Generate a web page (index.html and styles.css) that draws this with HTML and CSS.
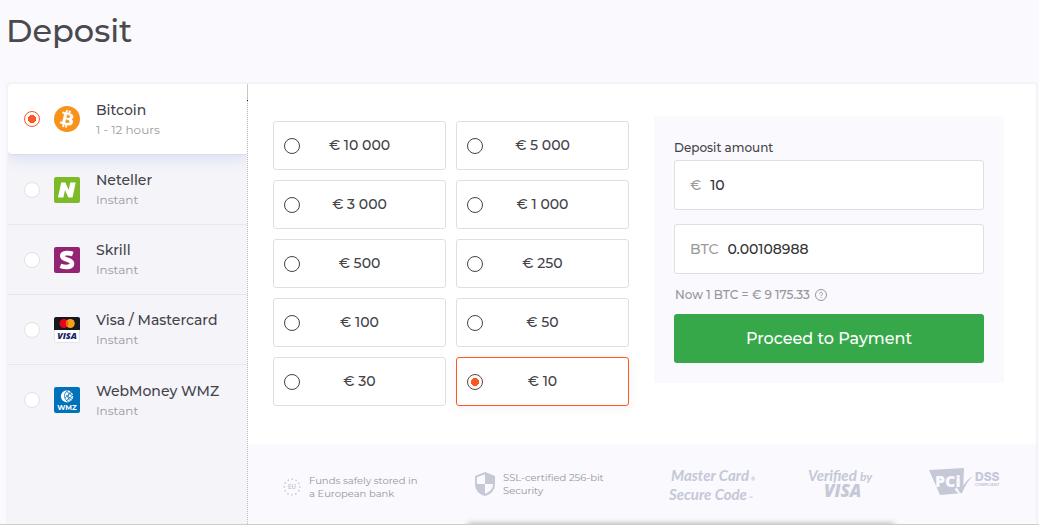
FILE: index.html
```html
<!DOCTYPE html>
<html lang="en">
<head>
<meta charset="utf-8">
<meta name="viewport" content="width=device-width, initial-scale=1">
<title>Deposit</title>
<link rel="stylesheet" href="styles.css">
</head>
<body>
<main class="page">
  <h1 class="title">Deposit</h1>
  <form class="panel">
    <div class="methods" role="radiogroup" aria-label="Payment method">
      <label class="method method-active">
        <input class="radio" type="radio" name="method" checked>
        <svg class="method-icon" viewBox="0 0 24 24" aria-hidden="true"><circle cx="12" cy="12" r="12" fill="#f7931a"/><path transform="translate(-.8 -.8) scale(1.070)" fill="#fff" stroke="#fff" stroke-width=".3" fill-rule="evenodd" d="M17.288 10.291c.24-1.59-.974-2.45-2.64-3.03l.54-2.153-1.315-.33-.525 2.107c-.345-.087-.705-.167-1.064-.25l.526-2.127-1.32-.33-.54 2.165c-.285-.067-.565-.132-.84-.2l-1.815-.45-.35 1.407s.975.225.955.236c.535.136.63.486.615.766l-1.477 5.92c-.075.166-.24.406-.614.314.015.02-.96-.24-.96-.24l-.66 1.51 1.71.426.93.242-.54 2.19 1.32.327.54-2.17c.36.1.705.19 1.05.273l-.51 2.154 1.32.33.545-2.19c2.24.427 3.93.257 4.64-1.774.57-1.637-.03-2.58-1.217-3.196.854-.193 1.5-.76 1.68-1.93h.01zm-3.01 4.22c-.404 1.64-3.157.75-4.05.53l.72-2.9c.896.23 3.757.67 3.33 2.37zm.41-4.24c-.37 1.49-2.662.735-3.405.55l.654-2.64c.744.18 3.137.524 2.75 2.084v.006z"/></svg>
        <span class="method-text"><span class="method-name">Bitcoin</span><span class="method-time">1 - 12 hours</span></span>
      </label>
      <label class="method">
        <input class="radio" type="radio" name="method">
        <svg class="method-icon" viewBox="0 0 26 26" aria-hidden="true"><rect width="26" height="26" rx="2" fill="#7dba27"/><path fill="#fff" d="M7.200 5.500h4.200l3.300 7.500 1.600-7.500h5.400l-3.200 15h-4.200l-3.300-7.600-1.600 7.600H4z"/></svg>
        <span class="method-text"><span class="method-name">Neteller</span><span class="method-time">Instant</span></span>
      </label>
      <label class="method">
        <input class="radio" type="radio" name="method">
        <svg class="method-icon" viewBox="0 0 26 26" aria-hidden="true"><rect width="26" height="26" rx="2" fill="#932474"/><path fill="none" stroke="#fff" stroke-width="4.600" d="M18.800 7C16 6 8.300 5 8.300 9c0 4.600 9.700 2.600 9.700 7.500 0 4.700-8 3.600-11.600 2.300"/></svg>
        <span class="method-text"><span class="method-name">Skrill</span><span class="method-time">Instant</span></span>
      </label>
      <label class="method">
        <input class="radio" type="radio" name="method">
        <svg class="method-icon" viewBox="0 0 26 26" aria-hidden="true"><rect x=".5" y=".5" width="25" height="25" rx="2" fill="#fff" stroke="#e3e4ea"/><path fill="#15191f" d="M0 13V2q0-2 2-2h22q2 0 2 2v11z"/><circle cx="10" cy="6.500" r="4.500" fill="#eb001b"/><circle cx="16.300" cy="6.500" r="4.500" fill="#f79e1b"/><path fill="#ff5f00" d="M13.150 3.300a4.500 4.500 0 0 1 0 6.400 4.500 4.500 0 0 1 0-6.400z"/><text class="svg-visa" x="13" y="22" text-anchor="middle">VISA</text></svg>
        <span class="method-text"><span class="method-name">Visa / Mastercard</span><span class="method-time">Instant</span></span>
      </label>
      <label class="method">
        <input class="radio" type="radio" name="method">
        <svg class="method-icon" viewBox="0 0 26 26" aria-hidden="true"><rect width="26" height="26" rx="2" fill="#0072ba"/><circle cx="13" cy="9.300" r="6.100" fill="#fff"/><path fill="none" stroke="#0072ba" stroke-width=".8" d="M14 3.500c-5 3-5 8 1 12M17 4.500c-4 3-4 7 0 10M12 8l7 5M12 4l7 5M11 11l7-6M12 14l7-6"/><text class="svg-wmz" x="13" y="23" text-anchor="middle">WMZ</text></svg>
        <span class="method-text"><span class="method-name">WebMoney WMZ</span><span class="method-time">Instant</span></span>
      </label>
    </div>

    <div class="content">
      <div class="workspace">
        <div class="amounts" role="radiogroup" aria-label="Amount">
          <label class="amount"><input class="radio radio-dark" type="radio" name="amount"><span>€ 10 000</span></label>
          <label class="amount"><input class="radio radio-dark" type="radio" name="amount"><span>€ 5 000</span></label>
          <label class="amount"><input class="radio radio-dark" type="radio" name="amount"><span>€ 3 000</span></label>
          <label class="amount"><input class="radio radio-dark" type="radio" name="amount"><span>€ 1 000</span></label>
          <label class="amount"><input class="radio radio-dark" type="radio" name="amount"><span>€ 500</span></label>
          <label class="amount"><input class="radio radio-dark" type="radio" name="amount"><span>€ 250</span></label>
          <label class="amount"><input class="radio radio-dark" type="radio" name="amount"><span>€ 100</span></label>
          <label class="amount"><input class="radio radio-dark" type="radio" name="amount"><span>€ 50</span></label>
          <label class="amount"><input class="radio radio-dark" type="radio" name="amount"><span>€ 30</span></label>
          <label class="amount amount-active"><input class="radio radio-dark" type="radio" name="amount" checked><span>€ 10</span></label>
        </div>
        <div class="summary">
          <label class="summary-label" for="eur">Deposit amount</label>
          <div class="field"><label class="unit" for="eur">€</label><input class="value" id="eur" type="text" value="10"></div>
          <div class="field"><label class="unit" for="btc">BTC</label><input class="value" id="btc" type="text" value="0.00108988"></div>
          <p class="rate">Now 1 BTC = € 9 175.33
            <svg class="help" viewBox="0 0 12 12" aria-hidden="true"><circle cx="6" cy="6" r="5.500"/><path d="M4.500 4.800c0-2 3-2 3 0C7.500 6 6 5.800 6 7.200M6 8v1"/></svg>
          </p>
          <button class="pay" type="button">Proceed to Payment</button>
        </div>
      </div>
      <div class="trust">
        <div class="trust-item trust-funds">
          <svg class="eu" viewBox="0 0 18 18" aria-hidden="true"><circle cx="9" cy="9" r="7.800" fill="none" stroke="#c5c8d6" stroke-width="1.700" stroke-linecap="round" stroke-dasharray="0 4.084"/><text class="svg-eu" x="9" y="11" text-anchor="middle">EU</text></svg>
          <span>Funds safely stored in<br>a European bank</span>
        </div>
        <div class="trust-item">
          <svg class="shield" viewBox="0 0 20 24" aria-hidden="true"><path fill="#c5c8d6" fill-rule="evenodd" d="M10 0l10 4v8c0 6-4 10.500-10 12C4 22.500 0 18 0 12V4zM10 2.200V12h8.200c-.5 5-3.400 8.200-8.200 9.800V12H1.800V5.200z"/></svg>
          <span>SSL-certified 256-bit<br>Security</span>
        </div>
        <div class="brand brand-mc"><span class="brand-indent">Master Card<small>®</small></span><span>Secure Code<small>™</small></span></div>
        <div class="brand brand-visa"><span>Verified <em>by</em></span><strong>VISA</strong></div>
        <svg class="pci" viewBox="0 0 72 28" aria-hidden="true">
          <path fill="#c5c8d6" d="M0 2l35-2-1 25-23 2z"/>
          <path fill="none" stroke="#f9f9fe" stroke-width="4" d="M27 20l5 5L41 12"/>
          <path fill="#c5c8d6" d="M27 18l3-1 2 4Q37 12 44 8 37 15 33 25h-2z"/>
          <text class="svg-pci" x="6" y="19">PCi</text>
          <text class="svg-dss" x="46" y="13">DSS</text>
          <text class="svg-compliant" x="46" y="18">COMPLIANT</text>
        </svg>
      </div>
    </div>
  </form>
  <div class="edge-shadow"></div>
</main>
</body>
</html>
```

FILE: styles.css
```css
* { box-sizing: border-box; }

body {
  margin: 0;
  background: #f9f9fe;
  color: #434349;
  font-family: Montserrat, Inter, "Open Sans", sans-serif;
}

.page {
  position: relative;
  display: flex;
  flex-direction: column;
  min-height: 100vh;
  padding: 0 1px 0 6px;
  border-bottom: 1px solid #d2ccc6;
  overflow: hidden;
}

.title {
  margin: 0;
  padding: 10px 0 30px;
  font-size: 32px;
  font-weight: 500;
  line-height: 42px;
  color: #4a4a4e;
}

.panel {
  flex: 1;
  display: flex;
  border: 2px solid #f3f3f8;
  border-bottom: 0;
  border-radius: 4px 4px 0 0;
  background: #fff;
}

.methods {
  position: relative;
  width: 240px;
  flex: none;
  background: #f4f4f9;
  border-right: 1px dotted #bdbdbd;
}

.methods::after {
  content: "";
  position: absolute;
  top: 0;
  right: -1px;
  width: 1px;
  height: 16px;
  background: #c9c7bf;
  border-bottom: 1px solid #222;
}

.method {
  display: flex;
  align-items: center;
  height: 70px;
  padding: 0 16px;
  border-bottom: 1px solid #e7e7ec;
}

.method:last-child { border-bottom: 0; }

.method-active {
  position: relative;
  height: 71px;
  background: #fff;
  border-color: #d9deeb;
  border-radius: 4px 0 0 4px;
  box-shadow: 0 4px 14px #d9e0f3;
  clip-path: inset(0 0 -24px 0);
}

.radio {
  appearance: none;
  flex: none;
  width: 16px;
  height: 16px;
  margin: 0;
  border: 1px solid #e2e2e6;
  border-radius: 50%;
  background: #fff;
}

.radio:checked {
  border-color: #ff5722;
  background: radial-gradient(circle, #ff5722 4px, #fff 4px);
}

.radio-dark { border-color: #434349; }
.radio-dark:checked { border-color: #6b4237; }

.method-icon {
  flex: none;
  width: 26px;
  height: 26px;
  margin: 0 16px 0 14px;
}

.method-text { display: flex; flex-direction: column; }
.method-name { font-size: 14px; font-weight: 500; line-height: 20px; }
.method-time { font-size: 12px; line-height: 19px; color: #9b9ba0; }

.svg-visa { font: italic 800 9px "Open Sans", sans-serif; fill: #1a2469; }
.svg-wmz { font: 700 7px Montserrat, Inter, sans-serif; fill: #fff; }

.content {
  flex: 1;
  display: flex;
  flex-direction: column;
  min-width: 0;
}

.workspace {
  display: grid;
  grid-template-columns: 356fr 350fr;
  align-items: start;
  gap: 25px;
  padding: 32px 32px 38px 25px;
}

.amounts {
  display: grid;
  grid-template-columns: 1fr 1fr;
  gap: 10px;
  padding-top: 5px;
}

.amount {
  display: grid;
  grid-template-columns: 16px 1fr 16px;
  align-items: center;
  height: 49px;
  padding: 0 10px;
  border: 1px solid #dfdfe1;
  border-radius: 3px;
  font-size: 14px;
  font-weight: 500;
  text-align: center;
}

.amount span { padding-bottom: 2px; }

.amount-active {
  border-color: #ff5722;
  box-shadow: 0 2px 14px #0000000d;
}

.summary {
  display: flex;
  flex-direction: column;
  padding: 20px;
  border-radius: 3px;
  background: #f9f9fe;
}

.summary-label {
  padding: 2px 0;
  font-size: 12px;
  font-weight: 500;
  line-height: 20px;
}

.field {
  display: flex;
  align-items: center;
  gap: 9px;
  height: 50px;
  padding: 0 15px;
  border: 1px solid #dfdfe1;
  border-radius: 3px;
  background: #fff;
  font-size: 14px;
}

.field + .field { margin-top: 14px; }
.unit { color: #9b9b9b; font-weight: 500; }

.value {
  flex: 1;
  min-width: 0;
  padding: 0;
  border: 0;
  outline: 0;
  background: none;
  color: #333338;
  font: inherit;
  font-weight: 500;
}

.rate {
  display: flex;
  align-items: center;
  gap: 5px;
  margin: 0;
  padding: 12px 1px 10px;
  font-size: 12px;
  font-weight: 500;
  line-height: 18px;
  color: #96969b;
}

.help {
  width: 12px;
  height: 12px;
  fill: none;
  stroke: #96969b;
  stroke-width: 1;
}

.pay {
  height: 49px;
  border: 0;
  border-radius: 3px;
  background: #36a849;
  color: #fff;
  font: 500 16px Montserrat, Inter, "Open Sans", sans-serif;
}

.trust {
  flex: 1;
  display: grid;
  grid-template-columns: 192fr 194fr 139fr 121fr 72fr;
  align-items: start;
  padding: 24px 35px 16px;
  background: #f9f9fe;
}

.trust-item {
  display: flex;
  align-items: center;
  gap: 8px;
  padding-top: 3px;
  font-size: 10px;
  line-height: 13px;
  color: #96969c;
  white-space: nowrap;
}

.trust-funds { padding-top: 6px; }
.eu { width: 18px; height: 18px; }
.shield { width: 20px; height: 24px; }
.svg-eu { font: 600 6px Inter, sans-serif; fill: #c5c8d6; }

.brand {
  display: flex;
  flex-direction: column;
  font: italic 700 15px/15px Lato, sans-serif;
  color: #c5c8d6;
  white-space: nowrap;
}

.brand-indent { padding-left: 2px; }
.brand small { margin-left: 2px; font-size: 5px; }
.brand em { font-size: 12px; }
.brand-visa strong { padding-left: 16px; font: italic 800 17px/14px "Open Sans", sans-serif; }

.pci { width: 72px; height: 28px; }
.svg-pci { font: 800 16px "Open Sans", sans-serif; fill: #f9f9fe; }
.svg-dss { font: 800 12px Inter, sans-serif; fill: #c5c8d6; }
.svg-compliant { font: 700 4px Inter, sans-serif; fill: #c5c8d6; }

.edge-shadow {
  position: absolute;
  bottom: -6px;
  left: 45%;
  right: 14%;
  height: 6px;
  box-shadow: 0 0 6px #00000059;
}
```
